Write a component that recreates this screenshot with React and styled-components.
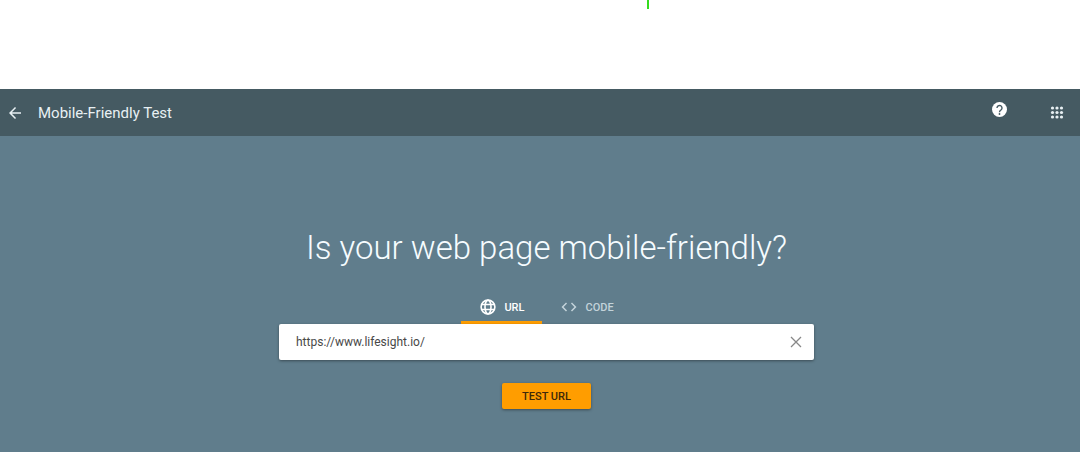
import React, { useState } from 'react';
import styled, { createGlobalStyle } from 'styled-components';
import { MdArrowBack, MdCode } from 'react-icons/md';

const GlobalStyle = createGlobalStyle`
  * {
    box-sizing: border-box;
  }
  body {
    margin: 0;
    background: #fff;
    font-family: Roboto, sans-serif;
  }
  button {
    padding: 0;
    border: 0;
    background: none;
    color: inherit;
    font-family: inherit;
    cursor: pointer;
  }
`;

const Page = styled.div`
  display: flex;
  flex-direction: column;
  min-height: 100vh;
`;

const TopSpace = styled.div`
  display: flex;
  height: 89px;
  padding-left: 60%;
`;

const Marker = styled.span`
  width: 2px;
  height: 9px;
  margin-left: -1px;
  background: #35dc1e;
`;

const Header = styled.header`
  display: flex;
  align-items: center;
  height: 47px;
  padding: 0 14px 0 6px;
  background: #455a62;
  color: #e8f0f3;
`;

const IconButton = styled.button`
  display: flex;
  color: ${(props) => props.$color};
  font-size: 18px;
`;

const HeaderTitle = styled.h1`
  margin: 0 auto 0 14px;
  padding-top: 1px;
  font-size: 15px;
  font-weight: 400;
  line-height: 20px;
`;

const HeaderActions = styled.div`
  display: flex;
  align-items: center;
  gap: 40px;
`;

const HelpButton = styled(IconButton)`
  padding-bottom: 6px;
`;

const Main = styled.main`
  display: flex;
  flex: 1;
  flex-direction: column;
  align-items: center;
  padding: 90px 0 40px 13px;
  background: #607d8c;
`;

const Question = styled.h2`
  margin: 0;
  color: #f6fcff;
  font-size: 33px;
  font-weight: 300;
  line-height: 44px;
`;

const Form = styled.form`
  display: flex;
  flex-direction: column;
  align-items: center;
  width: 50%;
  min-width: min(100%, 535px);
`;

const Tabs = styled.div`
  display: flex;
  margin-top: 20px;
`;

const Tab = styled.button`
  && {
    display: flex;
    align-items: center;
    gap: 7px;
    height: 34px;
    padding: 3px 18px 0;
    border-bottom: 3px solid
      ${(props) => (props.$active ? '#ff9d00' : 'transparent')};
    color: ${(props) => (props.$active ? '#fff' : '#c3d3da')};
    font-size: 11px;
    font-weight: 500;
  }
  svg {
    font-size: 18px;
  }
`;

const UrlBox = styled.div`
  display: flex;
  align-items: center;
  width: 100%;
  height: 36px;
  padding: 0 9px 0 17px;
  border-radius: 2px;
  background: #fff;
  box-shadow: 0 1px 3px rgba(0, 0, 0, 0.4);
`;

const UrlInput = styled.input`
  flex: 1;
  min-width: 0;
  padding: 0;
  border: 0;
  outline: 0;
  background: none;
  color: #484848;
  font-family: inherit;
  font-size: 12px;
`;

const SubmitButton = styled.button`
  && {
    height: 26px;
    margin-top: 23px;
    padding: 0 20px;
    border-radius: 2px;
    background: #ff9d00;
    box-shadow: 0 1px 3px rgba(0, 0, 0, 0.4);
    color: #40290a;
    font-size: 11px;
    font-weight: 500;
  }
`;

const AppsIcon = () => (
  <svg width="1em" height="1em" viewBox="0 0 18 18" fill="currentColor">
    {[4, 8.5, 13].map((cy) =>
      [4.5, 9, 13.5].map((cx) => (
        <circle key={`${cx}-${cy}`} cx={cx} cy={cy} r="1.6" />
      ))
    )}
  </svg>
);

const HelpIcon = () => (
  <svg width="1em" height="1em" viewBox="0 0 18 18" fill="none">
    <circle cx="9.5" cy="8.5" r="7.5" fill="currentColor" />
    <path
      d="M7 7a2.5 2.5 0 1 1 4.2 1.8C10.2 9.600 9.500 10 9.500 11.200"
      stroke="#455a62"
      strokeWidth="1.4"
    />
    <circle cx="9.5" cy="13" r="0.9" fill="#455a62" />
  </svg>
);

const GlobeIcon = () => (
  <svg
    width="1em"
    height="1em"
    viewBox="0 0 18 18"
    fill="none"
    stroke="currentColor"
    strokeWidth="1.6"
  >
    <circle cx="9" cy="9" r="6.9" />
    <ellipse cx="9" cy="9" rx="3" ry="6.9" />
    <path d="M2.500 6.500h13M2.500 11.500h13" />
  </svg>
);

const ClearIcon = () => (
  <svg width="1em" height="1em" viewBox="0 0 18 18" fill="none">
    <path d="M4 4l10 10M14 4L4 14" stroke="currentColor" strokeWidth="1.3" />
  </svg>
);

const App = () => {
  const [mode, setMode] = useState('url');
  const [url, setUrl] = useState('https://www.lifesight.io/');

  return (
    <Page>
      <GlobalStyle />
      <TopSpace>
        <Marker />
      </TopSpace>
      <Header>
        <IconButton aria-label="Back">
          <MdArrowBack />
        </IconButton>
        <HeaderTitle>Mobile-Friendly Test</HeaderTitle>
        <HeaderActions>
          <HelpButton aria-label="Help" $color="#fff">
            <HelpIcon />
          </HelpButton>
          <IconButton aria-label="Apps">
            <AppsIcon />
          </IconButton>
        </HeaderActions>
      </Header>
      <Main>
        <Question>Is your web page mobile-friendly?</Question>
        <Form onSubmit={(e) => e.preventDefault()}>
          <Tabs role="tablist">
            <Tab
              type="button"
              role="tab"
              aria-selected={mode === 'url'}
              $active={mode === 'url'}
              onClick={() => setMode('url')}
            >
              <GlobeIcon />
              URL
            </Tab>
            <Tab
              type="button"
              role="tab"
              aria-selected={mode === 'code'}
              $active={mode === 'code'}
              onClick={() => setMode('code')}
            >
              <MdCode />
              CODE
            </Tab>
          </Tabs>
          <UrlBox>
            <UrlInput
              aria-label="URL to test"
              value={url}
              onChange={(e) => setUrl(e.target.value)}
            />
            <IconButton
              type="button"
              aria-label="Clear"
              $color="#888"
              onClick={() => setUrl('')}
            >
              <ClearIcon />
            </IconButton>
          </UrlBox>
          <SubmitButton type="submit">TEST URL</SubmitButton>
        </Form>
      </Main>
    </Page>
  );
};

export default App;
